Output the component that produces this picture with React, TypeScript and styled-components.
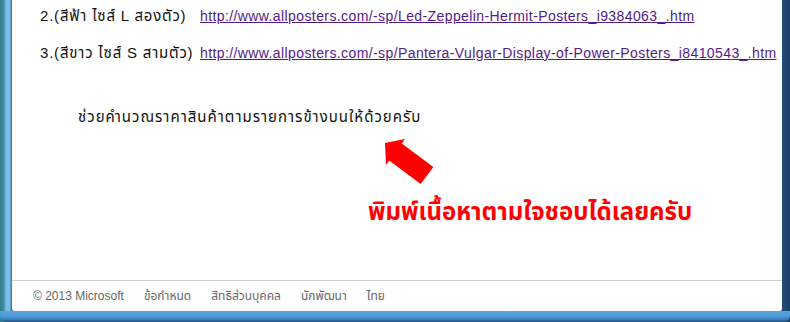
import React from "react";
import styled, { createGlobalStyle } from "styled-components";

const Global = createGlobalStyle`
  html, body { margin: 0; padding: 0; overflow: hidden; background: #2b6c8c; }
`;

const Window = styled.div`
  width: 790px;
  height: 322px;
  display: flex;
  flex-direction: column;
  background: linear-gradient(to right, #2f7f8f 0px, #3f8fa0 4px, #6aaccc 5px, #79bbe6 6px, #7cc0ea 10px, #3f7ea8 11px, #3f7ea8 12px, #3a86c4 12px, #2f73b6 96%, #1c3f66 100%);
`;

const Body = styled.div`
  flex: 1;
  display: flex;
  padding: 0 7px 0 12px;
  min-height: 0;
`;

const Pane = styled.div`
  flex: 1;
  background: #fff;
  display: flex;
  flex-direction: column;
  border-right: 1px solid #1f4f7a;
  border-radius: 0 0 3px 3px;
`;

const BottomFrame = styled.div`
  height: 11px;
  background: linear-gradient(to bottom, #5aa6dc 0px, #4c9ad6 5px, #3b86c6 8px, #1e4c78 11px);
  border-radius: 0 0 6px 6px;
`;

const Content = styled.div`
  flex: 1;
  font-family: "Liberation Sans", "Noto Sans Thai", "Noto Sans", sans-serif;
  font-size: 15px;
  color: #111;
`;

const Rows = styled.div`
  display: grid;
  grid-template-columns: 160px 1fr;
  row-gap: 19px;
  padding: 7px 0 0 28px;
  line-height: 18px;
`;

const Label = styled.span`
  white-space: nowrap;
  letter-spacing: 0.8px;
`;

const Link = styled.a`
  color: #551a8b;
  font-size: 14px;
  letter-spacing: 0.4px;
  text-decoration: underline;
  white-space: nowrap;
`;

const Note = styled.p`
  margin: 46px 0 0 66px;
  line-height: 18px;
  letter-spacing: 1px;
`;

const Arrow = styled.svg`
  display: block;
  margin: 11px 0 0 370px;
`;

const Shout = styled.p`
  margin: 10px 0 0 356px;
  font-size: 24px;
  font-weight: bold;
  color: #ff0000;
  line-height: 34px;
`;

const Footer = styled.div`
  border-top: 1px solid #cfcfcf;
  height: 30px;
  display: flex;
  align-items: center;
  gap: 20px;
  padding-left: 21px;
  font-family: "Liberation Sans", "Noto Sans Thai", "Noto Sans", sans-serif;
  font-size: 12px;
  color: #666;
`;

const FootItem = styled.span`
  white-space: nowrap;
`;

export default function App() {
  return (
    <>
      <Global />
      <Window>
        <Body>
          <Pane>
            <Content>
              <Rows>
                <Label>2.(สีฟ้า ไซส์ L สองตัว)</Label>
                <Link href="#">http://www.allposters.com/-sp/Led-Zeppelin-Hermit-Posters_i9384063_.htm</Link>
                <Label>3.(สีขาว ไซส์ S สามตัว)</Label>
                <Link href="#">http://www.allposters.com/-sp/Pantera-Vulgar-Display-of-Power-Posters_i8410543_.htm</Link>
              </Rows>
              <Note>ช่วยคำนวณราคาสินค้าตามรายการข้างบนให้ด้วยครับ</Note>
              <Arrow width="52" height="48" viewBox="381 135 52 48">
                <polygon points="384,141 404,137 400.8,141.6 432.3,165.1 419.7,181.9 388.2,158.4 385,163" fill="#ff0000" />
              </Arrow>
              <Shout>พิมพ์เนื้อหาตามใจชอบได้เลยครับ</Shout>
            </Content>
            <Footer>
              <FootItem>© 2013 Microsoft</FootItem>
              <FootItem>ข้อกำหนด</FootItem>
              <FootItem>สิทธิส่วนบุคคล</FootItem>
              <FootItem>นักพัฒนา</FootItem>
              <FootItem>ไทย</FootItem>
            </Footer>
          </Pane>
        </Body>
        <BottomFrame />
      </Window>
    </>
  );
}
